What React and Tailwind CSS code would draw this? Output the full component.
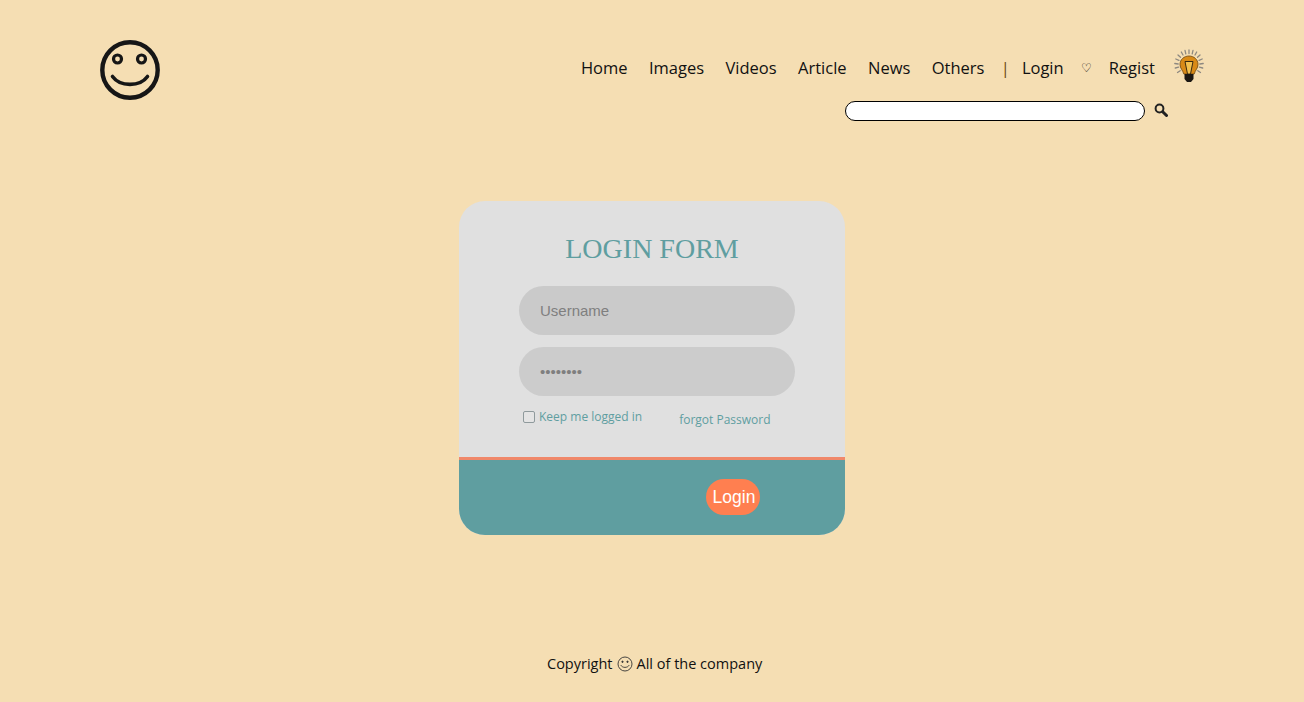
const links = ["Home", "Images", "Videos", "Article", "News", "Others"];

const Smiley = ({ className }) => (
    <svg viewBox="0 0 60 60" className={className} fill="none" stroke="#161616">
        <circle cx="30" cy="30" r="27.7" strokeWidth="4.4" />
        <circle cx="17.5" cy="19" r="4" strokeWidth="3.2" />
        <circle cx="41.5" cy="19" r="4" strokeWidth="3.2" />
        <path d="M12.5 36.5 C20 47 40 47 47.5 36.5" strokeWidth="3.6" strokeLinecap="round" />
    </svg>
);

const SmallSmiley = () => (
    <svg viewBox="0 0 16 16" className="w-[16px] h-[16px] mx-[4px]" fill="none" stroke="#333" strokeWidth="0.9">
        <circle cx="8" cy="8" r="7" />
        <circle cx="5.500" cy="5.800" r="0.700" fill="#333" />
        <circle cx="10.500" cy="5.800" r="0.700" fill="#333" />
        <path d="M4 9.500c1.500 2.600 6.500 2.600 8 0" strokeLinecap="round" />
    </svg>
);

const Bulb = () => (
    <svg viewBox="0 0 30 34" className="w-[30px] h-[34px] mt-[-4px]">
        <g stroke="#8d8880" strokeWidth="1.3" strokeLinecap="round">
            <path d="M15 1v3.500M11 1.400l.8 3.400M19 1.400l-.8 3.400M7.300 3l1.700 3M22.700 3l-1.700 3M4 6l2.500 2.300M26 6l-2.500 2.300M1.800 10l3.100 1.400M28.200 10l-3.100 1.400M.8 14.500l3.400.5M29.200 14.500l-3.400.5M1.300 19l3.300-.8M28.700 19l-3.300-.8M3.500 23.500l2.700-1.800M26.500 23.500l-2.700-1.800" />
        </g>
        <path d="M15 7c-5 0-9 3.500-9 8.500 0 3.800 2.800 5.700 3.800 9.500h10.400c1-3.800 3.800-5.700 3.800-9.500C24 10.500 20 7 15 7z" fill="#d98a17" stroke="#6b4510" strokeWidth="0.8" />
        <path d="M11 12.500h8l-2.500 12.500h-3z" fill="#f3c04e" stroke="#3a2a10" strokeWidth="1" />
        <path d="M10.500 25h9v5l-2.500 3h-4l-2.500-3z" fill="#1b1712" />
    </svg>
);

const SearchIcon = () => (
    <svg viewBox="0 0 14 14" className="w-[14px] h-[14px] ml-[9px] mb-[3px]" fill="none" stroke="#222">
        <circle cx="5.500" cy="5.500" r="3.900" strokeWidth="2" />
        <path d="M8.700 8.700l3.800 3.800" strokeWidth="3" strokeLinecap="round" />
    </svg>
);

const App = () => {
    return (
        <div className="min-h-[702px] bg-[#f5deb3] font-['Open_Sans',sans-serif] text-[#111] flex flex-col">
            {/* Header */}
            <header className="flex justify-between pl-[100px] pr-[100px] pt-[40px]">
                <Smiley className="w-[60px] h-[60px] shrink-0" />
                <div className="flex flex-col items-end">
                    <nav className="flex items-center h-[44px] text-[16.5px] leading-[24px] mt-[6px]">
                        {links.map((link) => (
                            <a key={link} href="#" className="mr-[21.4px]">{link}</a>
                        ))}
                        <span className="text-[#6b4a10] mr-[12px] ml-[-5px]">|</span>
                        <a href="#">Login</a>
                        <span className="text-[12px] text-black mx-[17px]">♡</span>
                        <a href="#" className="mr-[19px]">Regist</a>
                        <Bulb />
                    </nav>
                    <div className="flex items-center mt-[11px] mr-[36px]">
                        <input type="text" readOnly className="w-[300px] h-[20px] bg-white border border-black rounded-full" />
                        <SearchIcon />
                    </div>
                </div>
            </header>

            {/* Login card */}
            <main className="self-start ml-[459px] mt-[80px] w-[386px] h-[334px] rounded-[26px] overflow-hidden bg-[#e0e0e0] flex flex-col">
                <div className="flex-1 flex flex-col items-center pt-[29px]">
                    <h1 className="text-[28px] leading-[38px] text-[#5f9ea0] font-['Liberation_Serif',serif] font-normal">LOGIN FORM</h1>
                    <form className="w-[276px] ml-[10px] mt-[18px] flex flex-col gap-[12px] font-['Liberation_Sans',sans-serif]">
                        <input
                            type="text"
                            placeholder="Username"
                            className="h-[49px] rounded-full bg-[#cacaca] pl-[21px] text-[15px] placeholder:text-[#7f7f7f] outline-none"
                        />
                        <input
                            type="password"
                            defaultValue="password"
                            className="h-[49px] rounded-full bg-[#cccccc] pl-[21px] text-[15px] text-[#7f7f7f] outline-none"
                        />
                    </form>
                    <div className="w-[276px] ml-[10px] mt-[14px] flex text-[12px] text-[#5f9ea0]">
                        <label className="flex items-center ml-[4px] h-[14px]">
                            <span className="w-[12px] h-[12px] border border-[#8f9a9c] rounded-[2px] bg-[#e4e4e4] mr-[4px]" />
                            Keep me logged in
                        </label>
                        <a href="#" className="ml-[37px] mt-[2px] leading-[16px]">forgot Password</a>
                    </div>
                </div>
                <div className="h-[78px] bg-[#5f9ea0] border-t-[3px] border-[#f0886a] flex items-center">
                    <button type="button" className="ml-[247px] mt-[-1px] w-[54px] h-[36px] pl-[2px] rounded-[18px] bg-[#ff7f50] text-white text-[17.5px] font-['Liberation_Sans',sans-serif]">
                        Login
                    </button>
                </div>
            </main>

            {/* Footer */}
            <footer className="mt-[118px] ml-[547px] text-[14.5px] leading-[22px] flex items-center">
                Copyright
                <SmallSmiley />
                All of the company
            </footer>
        </div>
    );
};

export default App;
